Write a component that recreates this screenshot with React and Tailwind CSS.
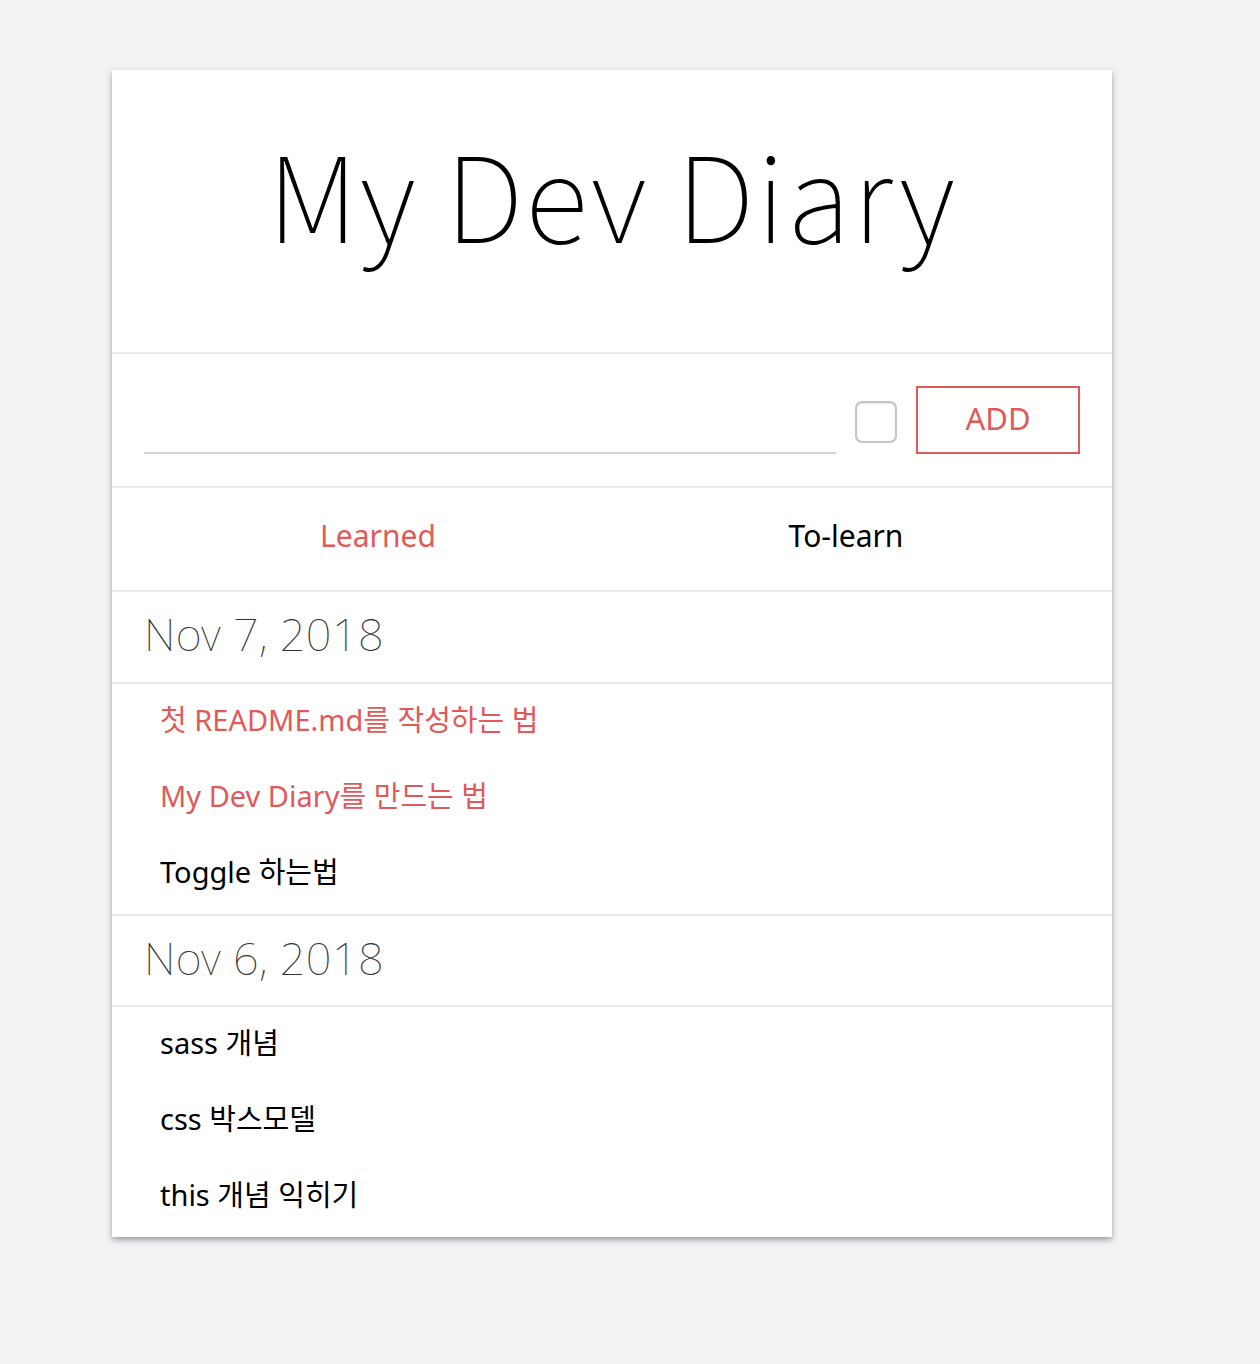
import React from "react";

const RED = "text-[#e05a5a]";

function Item({ text, red }) {
  return (
    <div className={`h-[76px] flex items-center pl-[48px] pb-[6px] text-[29px] ${red ? RED : "text-black"}`}>
      {text}
    </div>
  );
}

function Section({ date, items, dateH, last }) {
  return (
    <div className={last ? "" : "border-b-2 border-[#e8ebee]"}>
      <div className={`${dateH} flex items-center px-[32px] pb-[6px] border-b-2 border-[#e8ebee] text-[45px] font-thin tracking-[0.4px] text-[#333]`}>
        {date}
      </div>
      <div className="py-[1px]">
        {items.map((it, i) => (
          <Item key={i} text={it.t} red={it.r} />
        ))}
      </div>
    </div>
  );
}

export default function App() {
  return (
    <div
      className="min-h-[1364px] bg-[#f1f2f4] pt-[70px]"
      style={{ fontFamily: '"Noto Sans", "Noto Sans CJK KR", sans-serif' }}
    >
      <div className="w-[1000px] ml-[112px] bg-white shadow-[0_3px_6px_rgba(0,0,0,0.35)]">
        <div className="h-[284px] flex items-center justify-center border-b-2 border-[#e8ebee]">
          <h1
            className="text-[118px] font-thin text-black leading-none tracking-[2px] -mt-[38px]"
            style={{ fontFamily: '"Noto Sans CJK KR", sans-serif' }}
          >
            My Dev Diary
          </h1>
        </div>
        <div className="h-[134px] flex items-center px-[32px] border-b-2 border-[#e8ebee]">
          <div className="w-[692px] h-[68px] border-b-2 border-[#cfd3d6]" />
          <div className="ml-[19px] w-[42px] h-[42px] rounded-[7px] border-2 border-[#c4c4c4] shadow-[inset_0_1px_2px_rgba(0,0,0,0.1)] mt-[4px]" />
          <button className={`ml-[19px] w-[164px] h-[68px] border-2 border-[#e05a5a] ${RED} text-[31px] pb-[3px] flex items-center justify-center`}>
            ADD
          </button>
        </div>
        <div className="h-[104px] grid grid-cols-2 px-[32px] border-b-2 border-[#e8ebee]">
          <div className={`flex items-center justify-center text-[30px] -mt-[8px] ${RED}`}>Learned</div>
          <div className="flex items-center justify-center text-[30px] -mt-[8px] text-black">To-learn</div>
        </div>
        <Section
          dateH="h-[92px]"
          date="Nov 7, 2018"
          items={[
            { t: "첫 README.md를 작성하는 법", r: true },
            { t: "My Dev Diary를 만드는 법", r: true },
            { t: "Toggle 하는법", r: false },
          ]}
        />
        <Section
          dateH="h-[91px]"
          last
          date="Nov 6, 2018"
          items={[
            { t: "sass 개념" },
            { t: "css 박스모델" },
            { t: "this 개념 익히기" },
          ]}
        />
      </div>
    </div>
  );
}
